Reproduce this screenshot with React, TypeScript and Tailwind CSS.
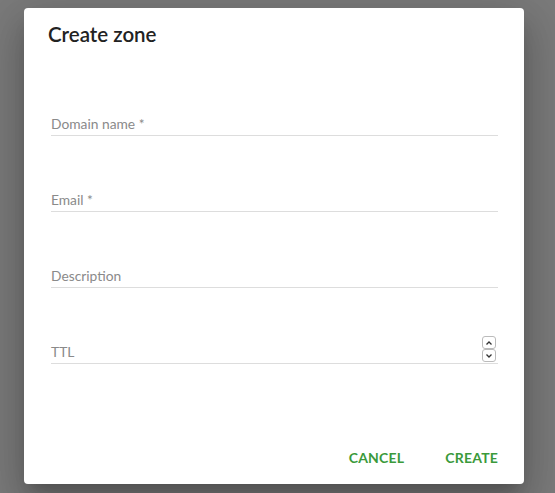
export default function App() {
  const fields = ["Domain name *", "Email *", "Description", "TTL"]

  return (
    <div
      className="flex h-[493px] w-[555px] items-start bg-[#7a7a7a] pl-[24px] pt-[8px]"
      style={{ fontFamily: "Lato, 'Noto Sans', sans-serif" }}
    >
      <div className="flex h-[476px] w-[500px] flex-col rounded-[4px] bg-white shadow-[0_11px_15px_-7px_rgba(0,0,0,0.2),0_24px_38px_3px_rgba(0,0,0,0.14),0_9px_46px_8px_rgba(0,0,0,0.12)]">
        {/* Header */}
        <h2 className="px-6 pt-[10px] text-[20.5px] font-semibold leading-[32px] text-[#222]">
          Create zone
        </h2>

        {/* Fields */}
        <div className="flex flex-col pl-[27px] pr-[26px] pt-[41px]">
          {fields.map((f, i) => (
            <div
              key={f}
              className={`relative flex h-[45px] items-end border-b border-[#ddd] pb-[2px] ${i > 0 ? "mt-[31px]" : ""}`}
            >
              <span className="text-[13.8px] leading-[18px] text-[#8a8a8a]">{f}</span>
              {f === "TTL" && (
                <div className="absolute right-[2px] top-[17px] flex flex-col">
                  <span className="flex h-[13px] w-[14px] items-center justify-center rounded-[3px] border border-[#bbb]">
                    <svg width="8" height="6" viewBox="0 0 8 6">
                      <path d="M1.5 4.5 L4 2 L6.5 4.5" fill="none" stroke="#333" strokeWidth="1.3" />
                    </svg>
                  </span>
                  <span className="flex h-[13px] w-[14px] items-center justify-center rounded-[3px] border border-[#bbb]">
                    <svg width="8" height="6" viewBox="0 0 8 6">
                      <path d="M1.5 1.5 L4 4 L6.5 1.5" fill="none" stroke="#333" strokeWidth="1.3" />
                    </svg>
                  </span>
                </div>
              )}
            </div>
          ))}
        </div>

        {/* Actions */}
        <div className="mt-auto flex justify-end gap-[25px] px-[18px] pb-[12px]">
          <button className="px-2 py-[6px] text-[14px] font-bold leading-[16px] tracking-[0.2px] text-[#3b9a3b]">
            CANCEL
          </button>
          <button className="px-2 py-[6px] text-[14px] font-bold leading-[16px] tracking-[0.2px] text-[#3b9a3b]">
            CREATE
          </button>
        </div>
      </div>
    </div>
  )
}
